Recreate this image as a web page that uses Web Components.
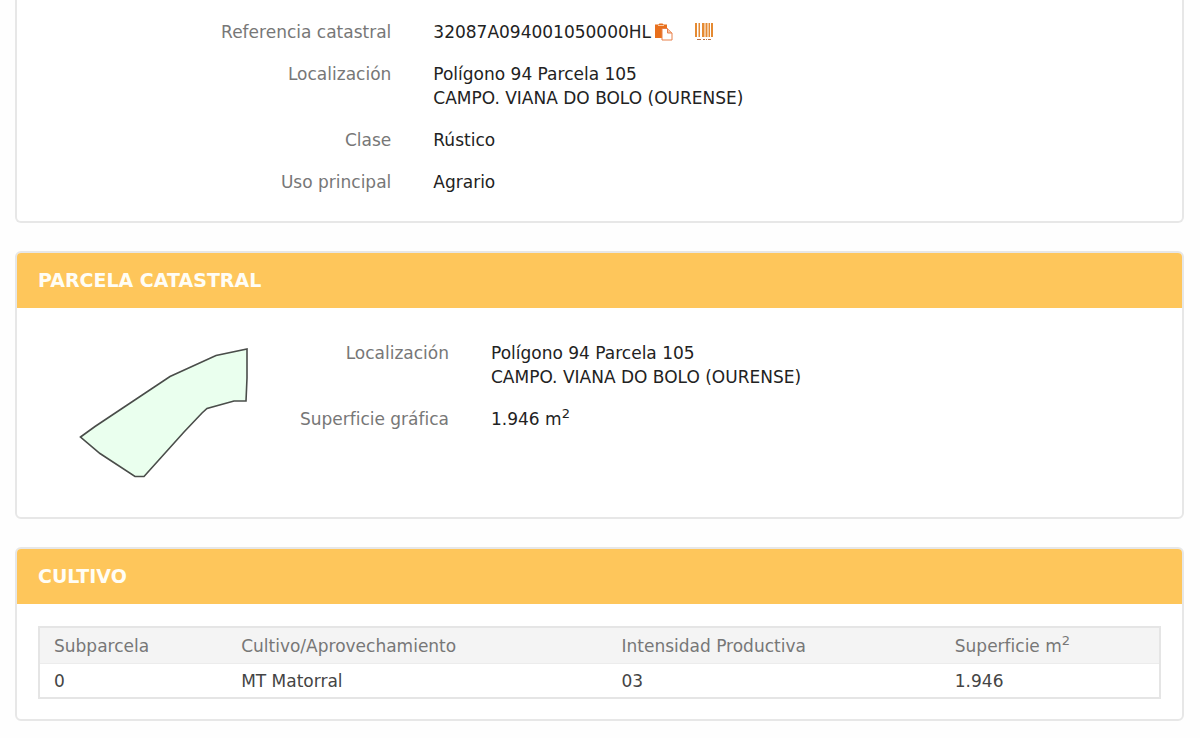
<!DOCTYPE html>
<html lang="es">
<head>
<meta charset="utf-8">
<meta name="viewport" content="width=device-width, initial-scale=1">
<title>Consulta catastral</title>
<style>
  body {
    margin: 0;
    background: #fefefe;
    color: #222;
    font: 17px/24px Verdana, "DejaVu Sans", sans-serif;
  }
</style>
</head>
<body>
<catastro-page></catastro-page>

<script>
class DataCard extends HTMLElement {
  connectedCallback() {
    const heading = this.getAttribute('heading');
    this.attachShadow({ mode: 'open' }).innerHTML = `
      <style>
        :host { display: block; }
        section {
          border: 2px solid #e7e7e7;
          border-radius: 6px;
          background: #fff;
          overflow: hidden;
        }
        :host([continued]) section { border-top: 0; border-radius: 0 0 6px 6px; }
        h2 {
          margin: 0;
          padding: 15px 21px 16px;
          background: #fec65b;
          color: #fffdf5;
          font-size: 19px;
          line-height: 24px;
          font-weight: bold;
        }
      </style>
      <section>${heading ? `<h2>${heading}</h2>` : ''}<slot></slot></section>`;
  }
}
customElements.define('data-card', DataCard);

class DataList extends HTMLElement {
  connectedCallback() {
    this.attachShadow({ mode: 'open' }).innerHTML = `
      <style>
        :host { display: grid; gap: 18px; align-content: start; }
      </style>
      <slot></slot>`;
  }
}
customElements.define('data-list', DataList);

class DataField extends HTMLElement {
  connectedCallback() {
    this.attachShadow({ mode: 'open' }).innerHTML = `
      <style>
        :host { display: block; }
        dl {
          display: grid;
          grid-template-columns: var(--field-columns);
          column-gap: 42px;
          margin: 0;
        }
        dt { color: #777; text-align: right; }
        dd { margin: 0; }
      </style>
      <dl><dt>${this.getAttribute('label')}</dt><dd><slot></slot></dd></dl>`;
  }
}
customElements.define('data-field', DataField);

class CopyButton extends HTMLElement {
  connectedCallback() {
    this.attachShadow({ mode: 'open' }).innerHTML = `
      <style>
        :host { display: flex; }
        button { display: flex; padding: 0; border: 0; background: none; cursor: pointer; }
      </style>
      <button type="button" aria-label="Copiar referencia catastral">
        <svg width="18" height="18" viewBox="0 0 18 18">
          <path d="M0 1.500h3.500l1-1h3l1 1H12V6H7v9H0z" fill="#e8701d"/>
          <path d="M3 2.500h6" stroke="#f9c9a3" stroke-width="1"/>
          <path d="M7 5.500h5.500l4.500 4.500v7H7z" fill="#fff" stroke="#e8804a"/>
          <path d="M12.500 5.500V10H17" fill="#f6c4a8" stroke="#e8804a"/>
        </svg>
      </button>`;
  }
}
customElements.define('copy-button', CopyButton);

class BarcodeButton extends HTMLElement {
  connectedCallback() {
    this.attachShadow({ mode: 'open' }).innerHTML = `
      <style>
        :host { display: flex; }
        button { display: flex; padding: 0; border: 0; background: none; cursor: pointer; }
      </style>
      <button type="button" aria-label="Ver código de barras">
        <svg width="18" height="18" viewBox="0 0 18 18">
          <g fill="#e58a32">
            <path d="M0 0h2v14H0zM3.500 0h1.500v14H3.500zM7 0h2.500v14H7zM10.500 0h2v14h-2zM13.500 0H15v14h-1.500zM16 0h2v14h-2z"/>
            <path d="M2 16h4v1H2zM8 16h2v1H8zM11 16h1v1h-1zM13 16h3v1h-3z" fill="#bd7140"/>
          </g>
        </svg>
      </button>`;
  }
}
customElements.define('barcode-button', BarcodeButton);

class ParcelMap extends HTMLElement {
  connectedCallback() {
    this.attachShadow({ mode: 'open' }).innerHTML = `
      <style>
        :host { display: block; }
        svg { display: block; }
      </style>
      <svg width="170" height="131" viewBox="79 348 170 131" role="img" aria-label="Croquis de la parcela">
        <path d="M80.500 437L95 426.500L170 376.500L216 355.500L247 349V378L246 401H234L207 408.500L202 413L184 432L144 476.500H135L100 453.500z"
          fill="#eaffee" stroke="#4a4d4a" stroke-width="1.600"/>
      </svg>`;
  }
}
customElements.define('parcel-map', ParcelMap);

class CropTable extends HTMLElement {
  connectedCallback() {
    this.attachShadow({ mode: 'open' }).innerHTML = `
      <style>
        :host { display: block; }
        table {
          width: 100%;
          table-layout: fixed;
          border-collapse: separate;
          border-spacing: 0;
          border: 2px solid #e5e5e5;
        }
        th, td { padding: 6px 14px 5px; text-align: left; font-weight: normal; }
        th { background: #f4f4f4; color: #777; border-bottom: 1px solid #ececec; }
        td { color: #444; padding-top: 5px; padding-bottom: 4px; }
        sup { font-size: 13px; line-height: 0; }
        .sub { width: 187px; }
        .crop { width: 380px; }
        .yield { width: 333px; }
        .area { width: 218px; }
      </style>
      <table>
        <colgroup><col class="sub"><col class="crop"><col class="yield"><col class="area"></colgroup>
        <thead>
          <tr>
            <th scope="col">Subparcela</th>
            <th scope="col">Cultivo/Aprovechamiento</th>
            <th scope="col">Intensidad Productiva</th>
            <th scope="col">Superficie m<sup>2</sup></th>
          </tr>
        </thead>
        <tbody>
          <tr><td>0</td><td>MT Matorral</td><td>03</td><td>1.946</td></tr>
        </tbody>
      </table>`;
  }
}
customElements.define('crop-table', CropTable);

class CatastroPage extends HTMLElement {
  connectedCallback() {
    this.attachShadow({ mode: 'open' }).innerHTML = `
      <style>
        :host { display: block; padding: 0 16px 16px 15px; }
        main { display: grid; gap: 28px; }
        .property { --field-columns: minmax(0, 353fr) minmax(0, 727fr); padding: 20px 21px 27px; }
        .reference { display: flex; align-items: center; gap: 4px; }
        barcode-button { margin-left: 18px; }
        .parcel {
          --field-columns: 160px minmax(0, 1fr);
          display: grid;
          grid-template-columns: auto minmax(0, 1fr);
          column-gap: 40px;
          padding: 33px 21px 38px 62px;
        }
        parcel-map { padding-top: 7px; }
        .crops { padding: 22px 21px 20px; }
        sup { font-size: 13px; line-height: 0; }
      </style>
      <main>
        <data-card continued>
          <data-list class="property">
            <data-field label="Referencia catastral">
              <span class="reference">32087A094001050000HL <copy-button></copy-button><barcode-button></barcode-button></span>
            </data-field>
            <data-field label="Localización">Polígono 94 Parcela 105<br>CAMPO. VIANA DO BOLO (OURENSE)</data-field>
            <data-field label="Clase">Rústico</data-field>
            <data-field label="Uso principal">Agrario</data-field>
          </data-list>
        </data-card>
        <data-card heading="PARCELA CATASTRAL">
          <div class="parcel">
            <parcel-map></parcel-map>
            <data-list>
              <data-field label="Localización">Polígono 94 Parcela 105<br>CAMPO. VIANA DO BOLO (OURENSE)</data-field>
              <data-field label="Superficie gráfica">1.946 m<sup>2</sup></data-field>
            </data-list>
          </div>
        </data-card>
        <data-card heading="CULTIVO">
          <crop-table class="crops"></crop-table>
        </data-card>
      </main>`;
  }
}
customElements.define('catastro-page', CatastroPage);
</script>
</body>
</html>
